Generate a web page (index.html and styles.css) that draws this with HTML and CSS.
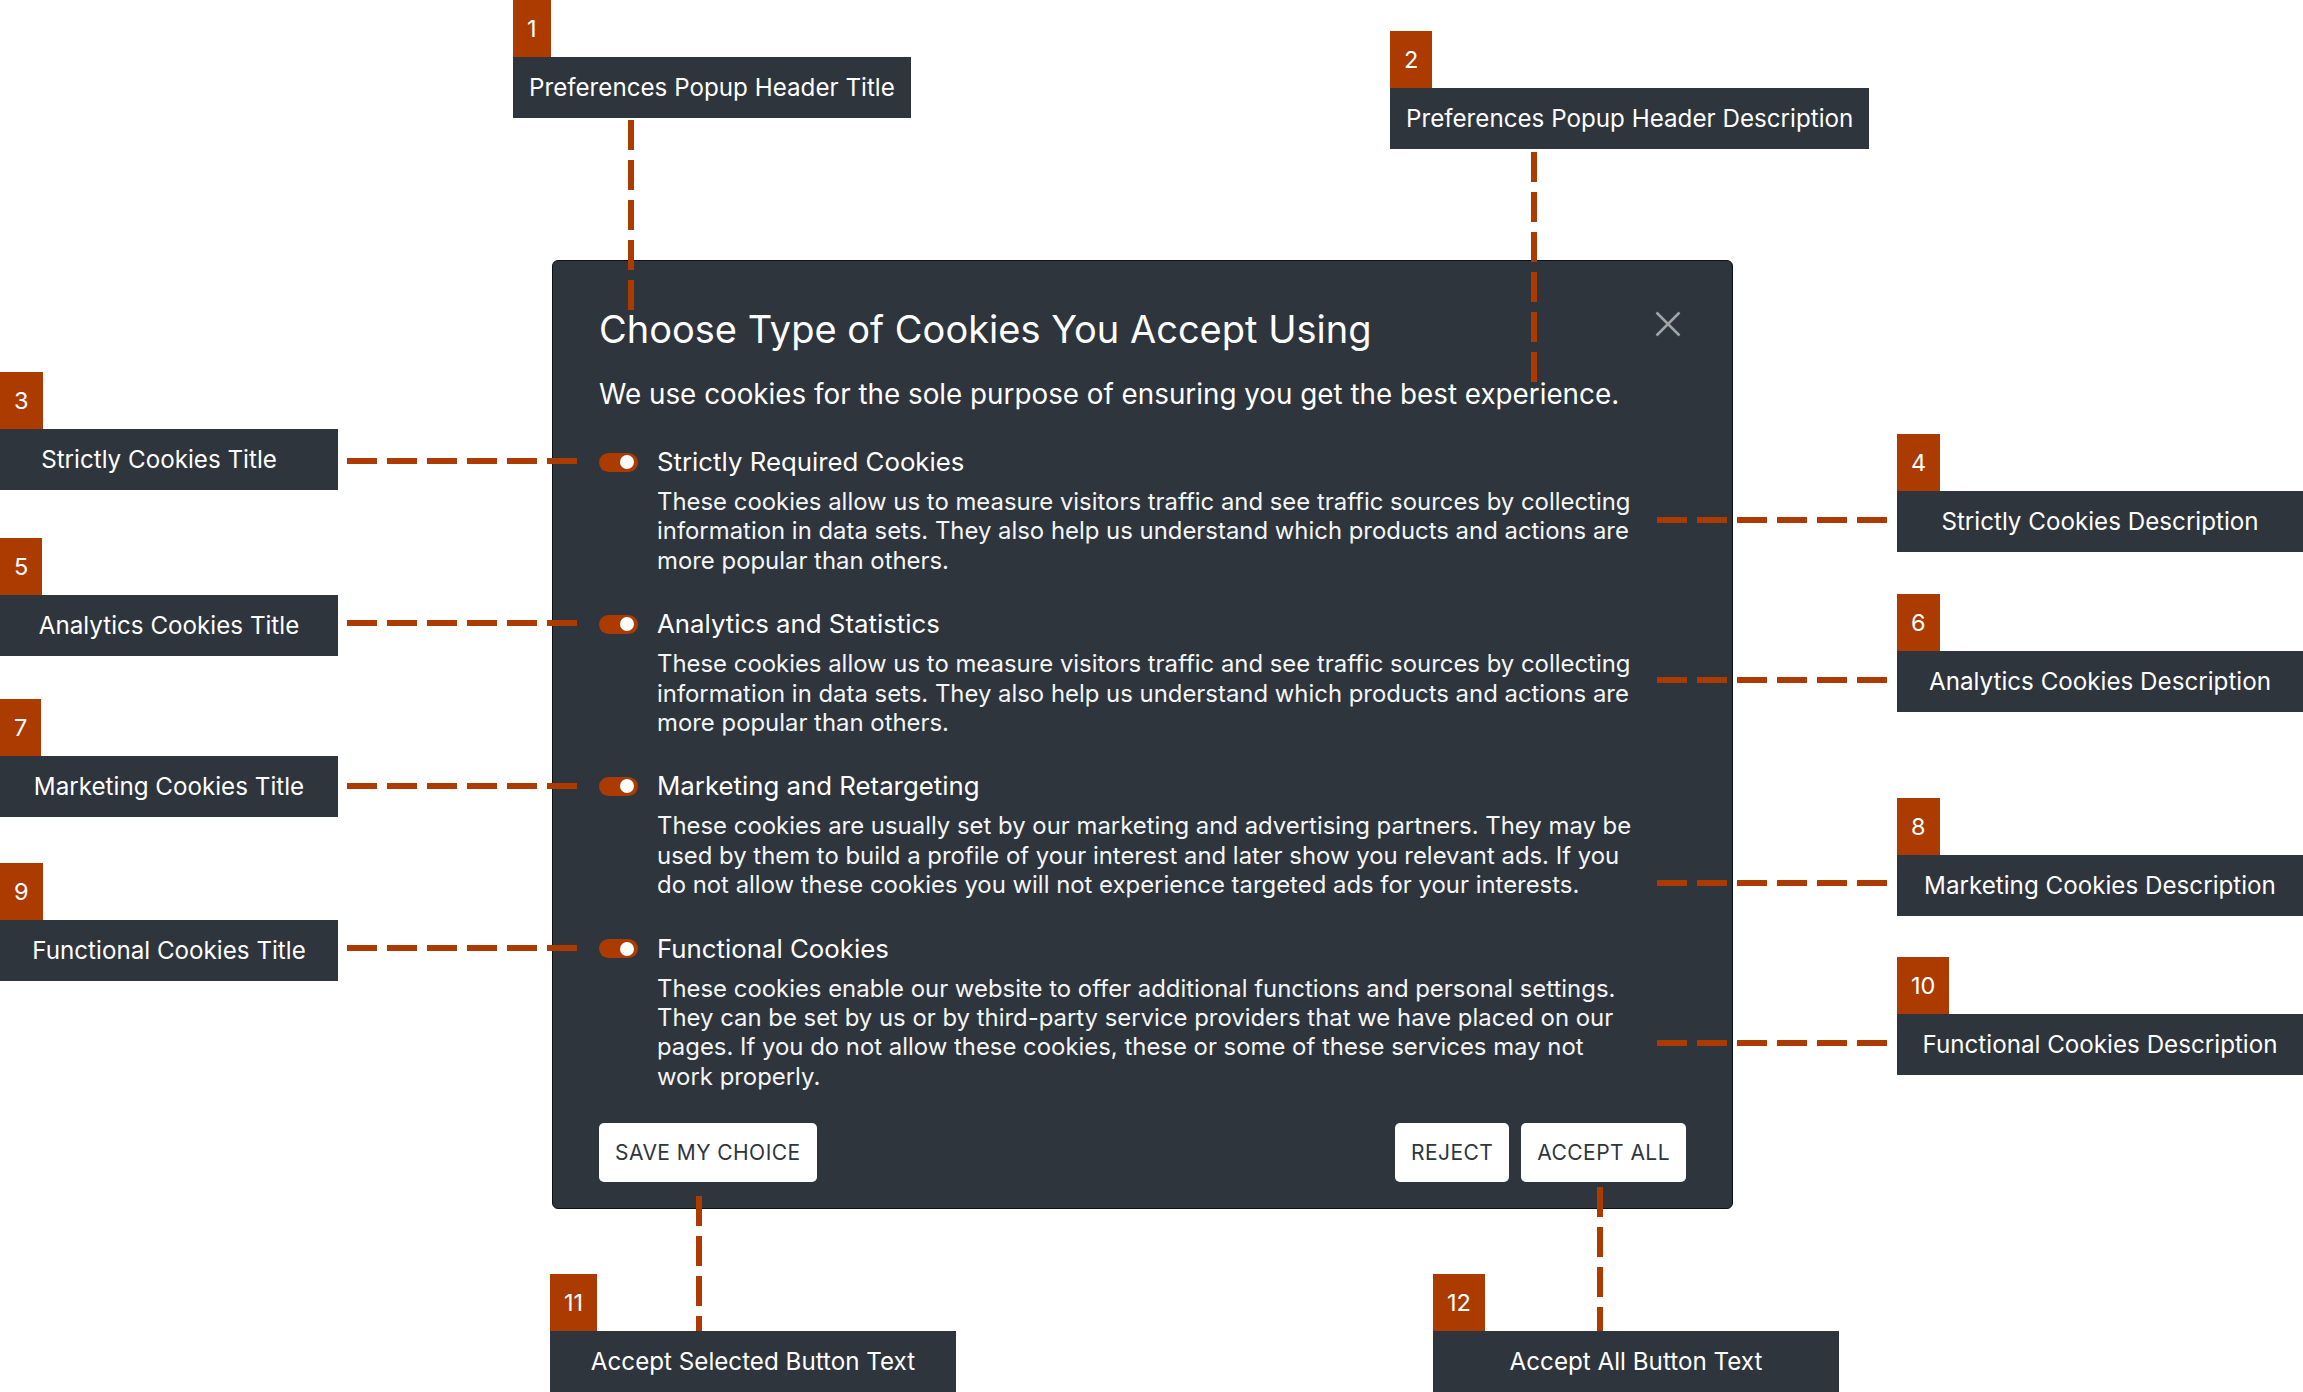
FILE: index.html
```html
<!DOCTYPE html>
<html lang="en">
<head>
<meta charset="utf-8">
<title>Cookie Preferences Popup – Annotated</title>
<link rel="stylesheet" href="styles.css">
</head>
<body>
<div class="stage">
  <div class="modal">
    <div class="modal-head">
      <h2 class="modal-title">Choose Type of Cookies You Accept Using</h2>
      <button class="close" aria-label="Close">
        <svg width="26" height="26" viewBox="0 0 26 26"><path d="M1.5 1.5 L24.5 24.5 M24.5 1.5 L1.5 24.5" stroke="#a0a4a8" stroke-width="2.5" fill="none" stroke-linecap="butt"/></svg>
      </button>
    </div>
    <p class="modal-desc">We use cookies for the sole purpose of ensuring you get the best experience.</p>
    <div class="sections">
      <div class="section">
        <div class="section-head"><span class="toggle"><span class="knob"></span></span><h3 class="section-title">Strictly Required Cookies</h3></div>
        <p class="section-desc">These cookies allow us to measure visitors traffic and see traffic sources by collecting<br>information in data sets. They also help us understand which products and actions are<br>more popular than others.</p>
      </div>
      <div class="section">
        <div class="section-head"><span class="toggle"><span class="knob"></span></span><h3 class="section-title">Analytics and Statistics</h3></div>
        <p class="section-desc">These cookies allow us to measure visitors traffic and see traffic sources by collecting<br>information in data sets. They also help us understand which products and actions are<br>more popular than others.</p>
      </div>
      <div class="section">
        <div class="section-head"><span class="toggle"><span class="knob"></span></span><h3 class="section-title">Marketing and Retargeting</h3></div>
        <p class="section-desc">These cookies are usually set by our marketing and advertising partners. They may be<br>used by them to build a profile of your interest and later show you relevant ads. If you<br>do not allow these cookies you will not experience targeted ads for your interests.</p>
      </div>
      <div class="section">
        <div class="section-head"><span class="toggle"><span class="knob"></span></span><h3 class="section-title">Functional Cookies</h3></div>
        <p class="section-desc">These cookies enable our website to offer additional functions and personal settings.<br>They can be set by us or by third-party service providers that we have placed on our<br>pages. If you do not allow these cookies, these or some of these services may not<br>work properly.</p>
      </div>
    </div>
    <div class="actions">
      <button class="btn">SAVE MY CHOICE</button>
      <div class="actions-right">
        <button class="btn">REJECT</button>
        <button class="btn">ACCEPT ALL</button>
      </div>
    </div>
  </div>

  <!-- connector lines -->
  <div class="dash-v v1"></div>
  <div class="dash-v v2"></div>
  <div class="dash-h h3"></div>
  <div class="dash-h h4"></div>
  <div class="dash-h h5"></div>
  <div class="dash-h h6"></div>
  <div class="dash-h h7"></div>
  <div class="dash-h h8"></div>
  <div class="dash-h h9"></div>
  <div class="dash-h h10"></div>
  <div class="dash-v v11"></div>
  <div class="dash-v v12"></div>

  <!-- callouts -->
  <div class="callout c1"><span class="badge">1</span><span class="label">Preferences Popup Header Title</span></div>
  <div class="callout c2"><span class="badge">2</span><span class="label">Preferences Popup Header Description</span></div>
  <div class="callout c3"><span class="badge">3</span><span class="label label-left label-short">Strictly Cookies Title</span></div>
  <div class="callout c4"><span class="badge">4</span><span class="label label-wide">Strictly Cookies Description</span></div>
  <div class="callout c5"><span class="badge">5</span><span class="label label-left">Analytics Cookies Title</span></div>
  <div class="callout c6"><span class="badge">6</span><span class="label label-wide">Analytics Cookies Description</span></div>
  <div class="callout c7"><span class="badge">7</span><span class="label label-left">Marketing Cookies Title</span></div>
  <div class="callout c8"><span class="badge">8</span><span class="label label-wide">Marketing Cookies Description</span></div>
  <div class="callout c9"><span class="badge">9</span><span class="label label-left">Functional Cookies Title</span></div>
  <div class="callout c10"><span class="badge">10</span><span class="label label-wide">Functional Cookies Description</span></div>
  <div class="callout c11"><span class="badge">11</span><span class="label label-wide">Accept Selected Button Text</span></div>
  <div class="callout c12"><span class="badge">12</span><span class="label label-wide">Accept All Button Text</span></div>
</div>
</body>
</html>
```
FILE: styles.css
```css
* { box-sizing: border-box; margin: 0; padding: 0; }
html, body { background: #ffffff; }
body { font-family: Inter, "Noto Sans", "Liberation Sans", sans-serif; }

.stage {
  position: relative;
  width: 2303px;
  height: 1392px;
  overflow: hidden;
  padding: 260px 0 0 552px;
  background: #ffffff;
}

/* ---------- modal ---------- */
.modal {
  width: 1181px;
  background: #2e353d;
  border: 1px solid #0e1114;
  border-radius: 6px;
  padding: 45px 46px 26px 46px;
  color: #ffffff;
}
.modal-head {
  display: flex;
  justify-content: space-between;
  align-items: flex-start;
}
.modal-title {
  font-size: 38px;
  line-height: 46px;
  font-weight: 400;
}
.close {
  width: 26px;
  height: 26px;
  margin: 5px 5px 0 0;
  background: none;
  border: 0;
  display: flex;
}
.modal-desc {
  margin-top: 24px;
  font-size: 27.8px;
  line-height: 36px;
}
.sections {
  margin-top: 34px;
  display: flex;
  flex-direction: column;
  gap: 33px;
}
.section-head {
  display: flex;
  align-items: center;
  gap: 19px;
  height: 32px;
}
.toggle {
  flex: none;
  width: 39px;
  height: 19px;
  border-radius: 10px;
  background: #ab3b00;
  display: flex;
  align-items: center;
  justify-content: flex-end;
  padding-right: 4px;
}
.knob {
  width: 14px;
  height: 14px;
  border-radius: 50%;
  background: #ffffff;
}
.section-title {
  font-size: 25.8px;
  line-height: 32px;
  font-weight: 400;
}
.section-desc {
  margin: 9px 0 0 58px;
  font-size: 23.9px;
  line-height: 29.4px;
  color: #f4f5f6;
  white-space: nowrap;
}
.actions {
  margin-top: 32px;
  display: flex;
  justify-content: space-between;
}
.actions-right {
  display: flex;
  gap: 12px;
}
.btn {
  height: 59px;
  padding: 0 16px;
  background: #ffffff;
  color: #2e353d;
  border: 0;
  border-radius: 5px;
  font-family: Inter, "Noto Sans", sans-serif;
  font-size: 21px;
  letter-spacing: 0.45px;
}

/* ---------- callouts ---------- */
.callout {
  position: absolute;
  display: flex;
  flex-direction: column;
  align-items: flex-start;
  z-index: 2;
}
.badge {
  height: 57px;
  padding: 0 14px;
  background: #ab3b00;
  color: #ffffff;
  font-size: 23.5px;
  line-height: 57px;
}
.label {
  height: 61px;
  padding: 0 16px;
  background: #2e353d;
  color: #ffffff;
  font-size: 24.2px;
  line-height: 61px;
  white-space: nowrap;
}
.label-left { width: 338px; padding: 0; text-align: center; }
.label-short { padding-right: 20px; }
.label-wide { width: 406px; padding: 0; text-align: center; }

.c1 { left: 513px; top: 0; }
.c2 { left: 1390px; top: 31px; }
.c3 { left: 0; top: 372px; }
.c4 { left: 1897px; top: 434px; }
.c5 { left: 0; top: 538px; }
.c6 { left: 1897px; top: 594px; }
.c7 { left: 0; top: 699px; }
.c8 { left: 1897px; top: 798px; }
.c9 { left: 0; top: 863px; }
.c10 { left: 1897px; top: 957px; }
.c11 { left: 550px; top: 1274px; }
.c12 { left: 1433px; top: 1274px; }

/* ---------- dashed connectors ---------- */
.dash-h {
  position: absolute;
  width: 230px;
  height: 6px;
  background: repeating-linear-gradient(to right, #ab3b00 0 30px, transparent 30px 40px);
  z-index: 3;
}
.dash-v {
  position: absolute;
  width: 6px;
  background: repeating-linear-gradient(to bottom, #ab3b00 0 30px, transparent 30px 40px);
  z-index: 3;
}
.v1 { left: 628px; top: 120px; height: 190px; }
.v2 { left: 1531px; top: 152px; height: 230px; }
.v11 { left: 696px; top: 1196px; height: 135px; }
.v12 { left: 1597px; top: 1187px; height: 144px; }

.h3 { left: 347px; top: 458px; }
.h5 { left: 347px; top: 620px; }
.h7 { left: 347px; top: 783px; }
.h9 { left: 347px; top: 945px; }
.h4 { left: 1657px; top: 517px; }
.h6 { left: 1657px; top: 677px; }
.h8 { left: 1657px; top: 880px; }
.h10 { left: 1657px; top: 1040px; }
```
